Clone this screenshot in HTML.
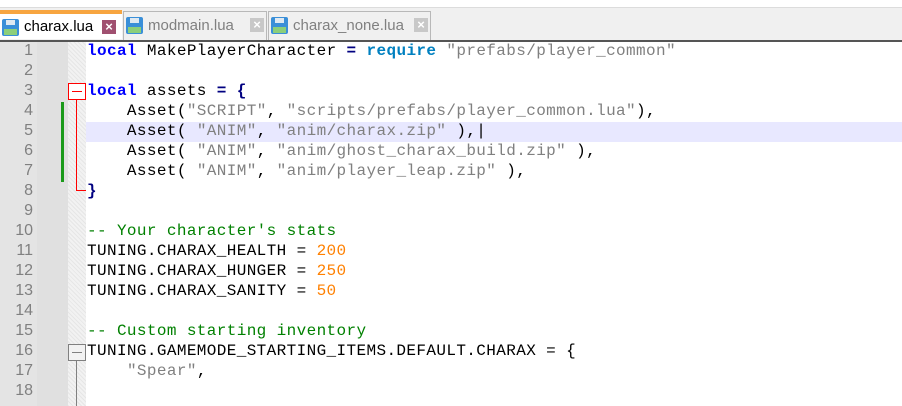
<!DOCTYPE html>
<html><head><style>
*{margin:0;padding:0;box-sizing:border-box}
body{width:902px;height:406px;overflow:hidden;background:#fff;font-family:"Liberation Sans",sans-serif;position:relative}
#tb{position:absolute;left:0;top:0;width:902px;height:8px;background:#fff;border-bottom:1px solid #dcdcdc}
#tabs{position:absolute;left:0;top:8px;width:902px;height:32px;background:#f0f0f0}
.tab{position:absolute;top:3px;height:29px;border:1px solid #b8b8b8;border-bottom:none;background:#f0f0f0;font-size:15px;color:#808080}
.tab.act{top:2px;background:#fff;border:none;border-top:4px solid #f7a540;color:#000}
.tab .t{position:absolute;left:24px;top:5px}
.tab.act .t{top:4px}
.disk{position:absolute;left:2px;top:5px;width:17px;height:17px;background:#3a8fd8;border-radius:2px}
.disk:before{content:"";position:absolute;left:4px;top:1px;width:9px;height:5px;background:#dfe9f2}
.disk:after{content:"";position:absolute;left:2px;top:10px;width:13px;height:6px;background:#8ccf7a}
.x{position:absolute;top:6px;width:14px;height:14px;background:#c8c8c8;color:#fff;font-size:13px;line-height:14px;text-align:center;font-weight:bold}
.act .x{background:#a05070}
#sep{position:absolute;left:0;top:40px;width:902px;height:2px;background:#555}
#ln{position:absolute;left:0;top:42px;width:37px;height:364px;background:#e4e4e4}
#cm{position:absolute;left:37px;top:42px;width:31px;height:364px;background:#e0e0e0}
#fm{position:absolute;left:68px;top:42px;width:18px;height:364px;background:#f2f2f2;background-image:repeating-linear-gradient(45deg,#e6e6e6 0 1px,transparent 1px 3px)}
.row{position:absolute;left:0;height:20px;width:902px;font-family:"Liberation Mono",monospace;font-size:16px;line-height:20px;white-space:pre}
.n{position:absolute;left:0;width:33px;text-align:right;color:#808080;font-family:"Liberation Sans",sans-serif;font-size:16px}
.c{position:absolute;left:87px;color:#000;letter-spacing:0.38px}
.k{color:#0000ff;font-weight:bold}
.r{color:#0080c0;font-weight:bold}
.s{color:#808080}
.o{color:#000080;font-weight:bold}
.num{color:#ff8000}
.cm{color:#008000}
</style></head><body>
<div id="tb"></div>
<div id="tabs">
 <div class="tab act" style="left:0;width:122px"><div class="disk"></div><span class="t">charax.lua</span><div class="x" style="left:102px">×</div></div>
 <div class="tab" style="left:123px;width:144px"><div class="disk"></div><span class="t">modmain.lua</span><div class="x" style="left:126px">×</div></div>
 <div class="tab" style="left:268px;width:163px"><div class="disk"></div><span class="t">charax_none.lua</span><div class="x" style="left:145px">×</div></div>
</div>
<div id="sep"></div>
<div id="ln"></div><div id="cm"></div><div id="fm"></div>
<div style="position:absolute;left:86px;top:122px;width:816px;height:20px;background:#e8e8ff"></div>
<div style="position:absolute;left:61px;top:102px;width:3px;height:80px;background:#1a9a1a"></div>
<div style="position:absolute;left:76px;top:92px;width:1px;height:99px;background:#f00"></div>
<div style="position:absolute;left:76px;top:190px;width:10px;height:1px;background:#f00"></div>
<div style="position:absolute;left:68px;top:83px;width:18px;height:17px;border:1px solid #f00;background:#fff"></div>
<div style="position:absolute;left:72px;top:91px;width:10px;height:1px;background:#f00"></div>
<div style="position:absolute;left:76px;top:352px;width:1px;height:54px;background:#808080"></div>
<div style="position:absolute;left:68px;top:344px;width:18px;height:17px;border:1px solid #808080;background:#f2f2f2"></div>
<div style="position:absolute;left:72px;top:352px;width:10px;height:1px;background:#808080"></div>

<div class="row" style="top:41px"><span class="n">1</span><span class="c"><span class="k">local</span> MakePlayerCharacter <span class="o">=</span> <span class="r">require</span> <span class="s">"prefabs/player_common"</span></span></div>
<div class="row" style="top:61px"><span class="n">2</span></div>
<div class="row" style="top:81px"><span class="n">3</span><span class="c"><span class="k">local</span> assets <span class="o">=</span> <span class="o">{</span></span></div>
<div class="row" style="top:101px"><span class="n">4</span><span class="c">    Asset(<span class="s">"SCRIPT"</span>, <span class="s">"scripts/prefabs/player_common.lua"</span>),</span></div>
<div class="row" style="top:121px"><span class="n">5</span><span class="c">    Asset( <span class="s">"ANIM"</span>, <span class="s">"anim/charax.zip"</span> ),|</span></div>
<div class="row" style="top:141px"><span class="n">6</span><span class="c">    Asset( <span class="s">"ANIM"</span>, <span class="s">"anim/ghost_charax_build.zip"</span> ),</span></div>
<div class="row" style="top:161px"><span class="n">7</span><span class="c">    Asset( <span class="s">"ANIM"</span>, <span class="s">"anim/player_leap.zip"</span> ),</span></div>
<div class="row" style="top:181px"><span class="n">8</span><span class="c"><span class="o">}</span></span></div>
<div class="row" style="top:201px"><span class="n">9</span></div>
<div class="row" style="top:221px"><span class="n">10</span><span class="c cm">-- Your character's stats</span></div>
<div class="row" style="top:241px"><span class="n">11</span><span class="c">TUNING.CHARAX_HEALTH = <span class="num">200</span></span></div>
<div class="row" style="top:261px"><span class="n">12</span><span class="c">TUNING.CHARAX_HUNGER = <span class="num">250</span></span></div>
<div class="row" style="top:281px"><span class="n">13</span><span class="c">TUNING.CHARAX_SANITY = <span class="num">50</span></span></div>
<div class="row" style="top:301px"><span class="n">14</span></div>
<div class="row" style="top:321px"><span class="n">15</span><span class="c cm">-- Custom starting inventory</span></div>
<div class="row" style="top:341px"><span class="n">16</span><span class="c">TUNING.GAMEMODE_STARTING_ITEMS.DEFAULT.CHARAX = {</span></div>
<div class="row" style="top:361px"><span class="n">17</span><span class="c">    <span class="s">"Spear"</span>,</span></div>
<div class="row" style="top:381px"><span class="n">18</span></div>
</body></html>
